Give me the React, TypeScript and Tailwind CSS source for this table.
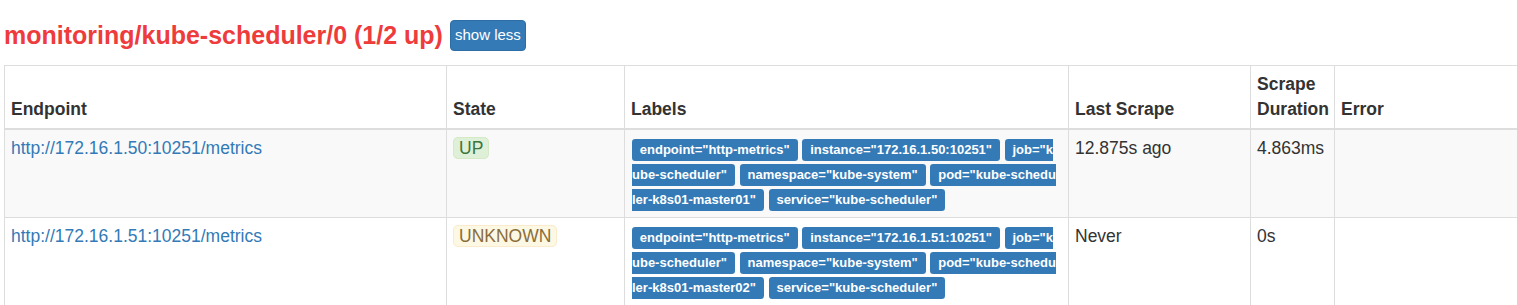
import React from 'react'

const ROW = 'grid grid-cols-[442px_178px_444px_182px_84px_400px]'

type Target = {
  endpoint: string
  state: 'UP' | 'UNKNOWN'
  labels: React.ReactNode[]
  lastScrape: string
  duration: string
}

function Label({ children }: { children: React.ReactNode }) {
  return (
    <span className="inline rounded-[3.3px] bg-[#337ab7] px-[7.8px] pt-[2.6px] pb-[3.9px] text-[13px] leading-none font-bold text-white">
      {children}
    </span>
  )
}

function State({ state }: { state: Target['state'] }) {
  const styles =
    state === 'UP'
      ? 'bg-[#dff0d8] text-[#3c763d] border-[#d6e9c6]'
      : 'bg-[#fcf8e3] text-[#8a6d3b] border-[#faebcc]'
  return <span className={`inline border rounded-[5px] px-[5px] ${styles}`}>{state}</span>
}

function labelsFor(ip: string, master: string) {
  return [
    'endpoint="http-metrics"',
    `instance="${ip}:10251"`,
    <>job="k<br />ube-scheduler"</>,
    'namespace="kube-system"',
    <>pod="kube-schedu<br />ler-k8s01-{master}"</>,
    'service="kube-scheduler"',
  ]
}

const targets: Target[] = [
  {
    endpoint: 'http://172.16.1.50:10251/metrics',
    state: 'UP',
    labels: labelsFor('172.16.1.50', 'master01'),
    lastScrape: '12.875s ago',
    duration: '4.863ms',
  },
  {
    endpoint: 'http://172.16.1.51:10251/metrics',
    state: 'UNKNOWN',
    labels: labelsFor('172.16.1.51', 'master02'),
    lastScrape: 'Never',
    duration: '0s',
  },
]

const headers = ['Endpoint', 'State', 'Labels', 'Last Scrape', 'Scrape Duration', 'Error']

export default function App() {
  return (
    <div
      className="h-[305px] w-[1517px] overflow-hidden bg-white pt-[20px] pl-[4px] text-[17.5px] leading-[25px] text-[#333]"
      style={{ fontFamily: '"Liberation Sans", Arial, sans-serif' }}
    >
      {/* Job header */}
      <div className="flex items-center gap-[7px]">
        <h2 className="text-[25px] leading-[27.5px] font-bold text-[#ee3b3b]">
          monitoring/kube-scheduler/0 (1/2 up)
        </h2>
        <button className="h-[31px] rounded-[4px] border border-[#2e6da4] bg-[#337ab7] px-[4px] text-[15px] leading-[22.5px] text-white">
          show less
        </button>
      </div>

      {/* Targets table */}
      <div className="mt-[14px] w-max">
        <div className={ROW}>
          {headers.map(h => (
            <div
              key={h}
              className="flex items-end border-t border-b-2 border-l border-[#ddd] p-[6px] font-bold"
            >
              {h}
            </div>
          ))}
        </div>

        {targets.map((t, i) => (
          <div key={t.endpoint} className={`${ROW} ${i % 2 === 0 ? 'bg-[#f9f9f9]' : 'bg-white'}`}>
            <div className="border-b border-l border-[#ddd] p-[6px]">
              <a className="text-[#337ab7]">{t.endpoint}</a>
            </div>
            <div className="border-b border-l border-[#ddd] p-[6px]">
              <State state={t.state} />
            </div>
            <div className="border-b border-l border-[#ddd] py-[6px] pr-[6px] pl-[7px] whitespace-nowrap">
              {t.labels.map((l, j) => (
                <React.Fragment key={j}>
                  {j > 0 && ' '}
                  <Label>{l}</Label>
                </React.Fragment>
              ))}
            </div>
            <div className="border-b border-l border-[#ddd] p-[6px]">{t.lastScrape}</div>
            <div className="border-b border-l border-[#ddd] p-[6px]">{t.duration}</div>
            <div className="border-b border-l border-[#ddd] p-[6px]"></div>
          </div>
        ))}
      </div>
    </div>
  )
}
